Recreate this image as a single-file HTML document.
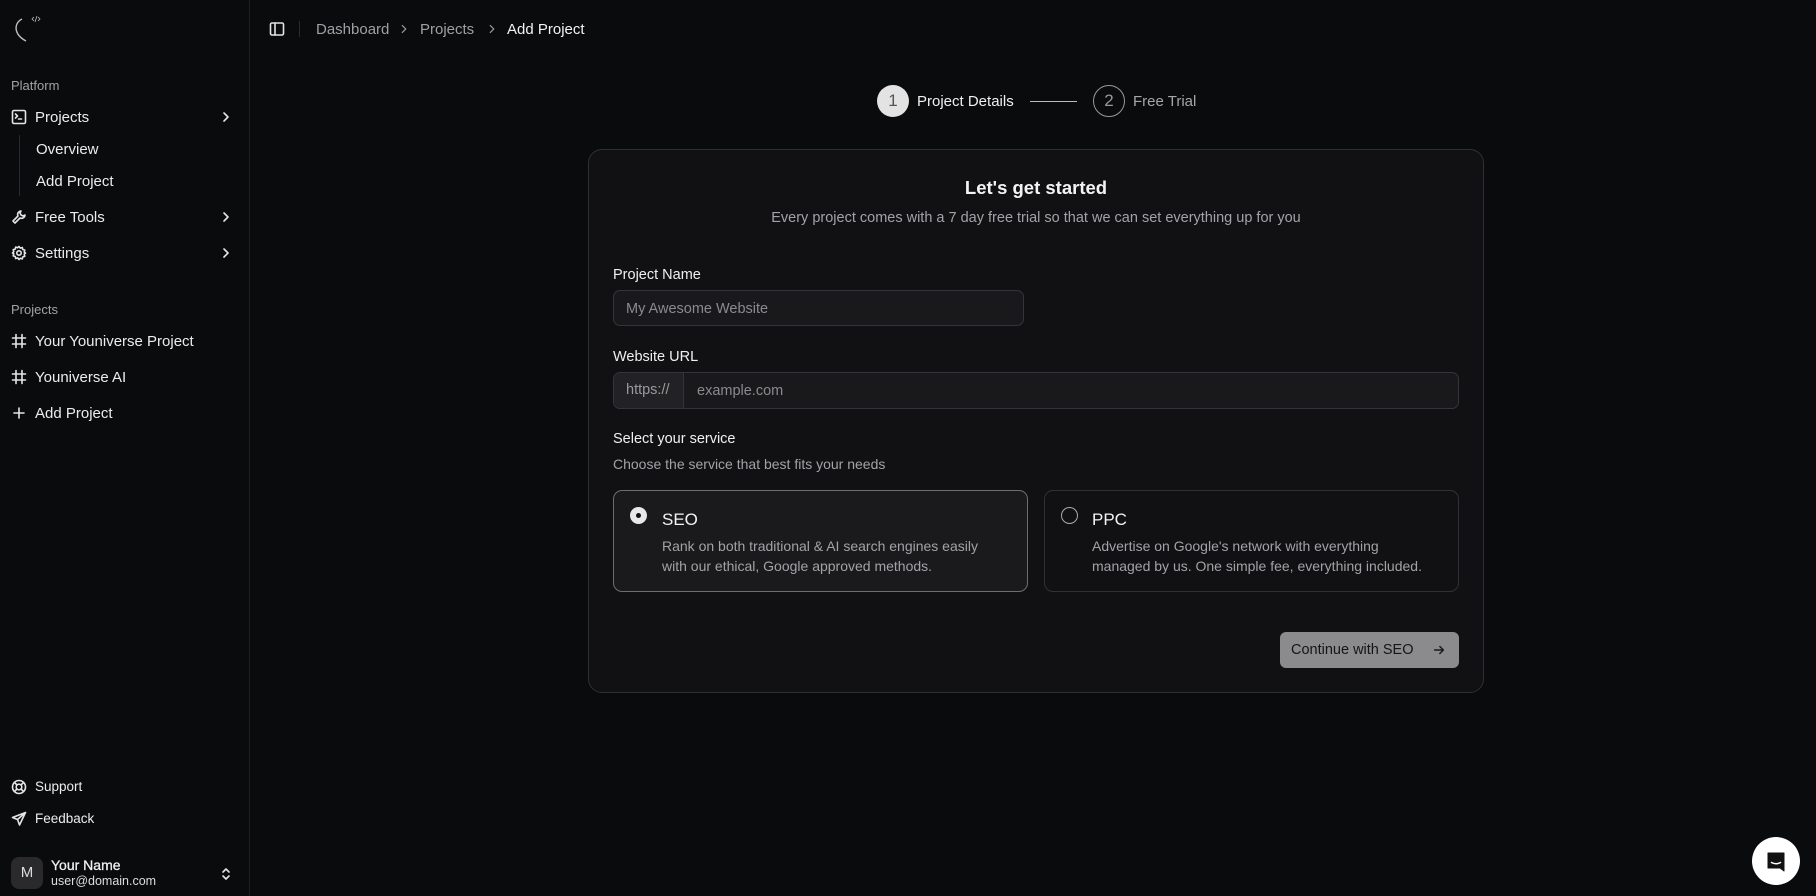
<!DOCTYPE html>
<html><head><meta charset="utf-8"><style>
*{box-sizing:border-box;margin:0;padding:0}
body{width:1816px;height:896px;background:#0a0b0d;font-family:"Liberation Sans",sans-serif;color:#ededed;position:relative;overflow:hidden}
.a{position:absolute;white-space:nowrap}
.side{position:absolute;left:0;top:0;width:250px;height:896px;border-right:1px solid #1e1f22;background:#0a0b0d}
.ic{position:absolute;width:16px;height:16px;fill:none;stroke:#e5e5e5;stroke-width:1.6;stroke-linecap:round;stroke-linejoin:round}
.nav{font-size:15px;color:#ececec}
.lbl{font-size:13px;color:#a3a3a3}
.card{position:absolute;left:588px;top:149px;width:896px;height:544px;border:1px solid #2f3033;border-radius:14px;background:#111114}
.inp{position:absolute;border:1px solid #34353a;border-radius:7px;background:#19191c;font-size:14.5px;color:#8b8b8f}
.opt{position:absolute;top:490px;height:102px;border-radius:9px}
</style></head><body>
<div class="side">
  <svg class="a" style="left:10px;top:12px" width="32" height="32" viewBox="0 0 32 32" fill="none" stroke="#bbb" stroke-width="1.4"><path d="M12 7 C4 11,3 22,16 29"/><path d="M24 5l-2 2 2 2M28 5l2 2-2 2M27 4l-2 6" stroke-width="0.8"/></svg>
  <div class="a lbl" style="left:11px;top:78px">Platform</div>
  <svg class="ic" style="left:11px;top:109px" viewBox="0 0 16 16"><rect x="1.5" y="1.5" width="13" height="13" rx="1.5"/><path d="M4.5 5l2 2-2 2M7.5 10h3"/></svg>
  <div class="a nav" style="left:35px;top:109px">Projects</div>
  <svg class="ic" style="left:218px;top:109px" viewBox="0 0 16 16"><path d="M6 4l4 4-4 4"/></svg>
  <div class="a" style="left:19px;top:135px;width:1px;height:61px;background:#2a2b2e"></div>
  <div class="a nav" style="left:36px;top:141px">Overview</div>
  <div class="a nav" style="left:36px;top:173px">Add Project</div>
  <svg class="ic" style="left:11px;top:209px" viewBox="0 0 16 16"><path d="M10 2a3.5 3.5 0 0 0-3 5L2 12l2 2 5-5a3.5 3.5 0 0 0 5-3l-2 1-2-1-1-2z"/></svg>
  <div class="a nav" style="left:35px;top:209px">Free Tools</div>
  <svg class="ic" style="left:218px;top:209px" viewBox="0 0 16 16"><path d="M6 4l4 4-4 4"/></svg>
  <svg class="ic" style="left:11px;top:245px" viewBox="0 0 16 16"><circle cx="8" cy="8" r="2.2"/><path d="M8 1.5l1.3 1.6 2-.6.5 2 2 .6-.6 2L14.5 8l-1.3 1.3.6 2-2 .6-.5 2-2-.6L8 14.5l-1.3-1.6-2 .6-.5-2-2-.6.6-2L1.5 8l1.3-1.3-.6-2 2-.6.5-2 2 .6z"/></svg>
  <div class="a nav" style="left:35px;top:245px">Settings</div>
  <svg class="ic" style="left:218px;top:245px" viewBox="0 0 16 16"><path d="M6 4l4 4-4 4"/></svg>
  <div class="a lbl" style="left:11px;top:302px">Projects</div>
  <svg class="ic" style="left:11px;top:333px" viewBox="0 0 16 16"><path d="M5 1.5v13M11 1.5v13M1.5 5h13M1.5 11h13"/></svg>
  <div class="a nav" style="left:35px;top:333px">Your Youniverse Project</div>
  <svg class="ic" style="left:11px;top:369px" viewBox="0 0 16 16"><path d="M5 1.5v13M11 1.5v13M1.5 5h13M1.5 11h13"/></svg>
  <div class="a nav" style="left:35px;top:369px">Youniverse AI</div>
  <svg class="ic" style="left:11px;top:405px" viewBox="0 0 16 16"><path d="M8 3v10M3 8h10"/></svg>
  <div class="a nav" style="left:35px;top:405px">Add Project</div>
  <svg class="ic" style="left:11px;top:779px" viewBox="0 0 16 16"><circle cx="8" cy="8" r="6.5"/><circle cx="8" cy="8" r="2.8"/><path d="M3.4 3.4l2.6 2.6M10 10l2.6 2.6M12.6 3.4L10 6M6 10l-2.6 2.6"/></svg>
  <div class="a" style="left:35px;top:779px;font-size:13.5px">Support</div>
  <svg class="ic" style="left:11px;top:811px" viewBox="0 0 16 16"><path d="M14.5 1.5L1.5 6.5l5 2 2 5.5z M6.5 8.5l8-7"/></svg>
  <div class="a" style="left:35px;top:811px;font-size:13.5px">Feedback</div>
  <div class="a" style="left:11px;top:857px;width:32px;height:32px;border-radius:8px;background:#2a2a2c;font-size:15px;color:#ddd;text-align:center;line-height:32px">M</div>
  <div class="a" style="left:51px;top:857px;font-size:14px;color:#f0f0f0;-webkit-text-stroke:0.3px #f0f0f0">Your Name</div>
  <div class="a" style="left:51px;top:874px;font-size:12.5px;color:#ddd">user@domain.com</div>
  <svg class="ic" style="left:218px;top:866px" viewBox="0 0 16 16"><path d="M5 6l3-3 3 3M5 10l3 3 3-3"/></svg>
</div>

<svg class="ic" style="left:269px;top:21px" viewBox="0 0 16 16"><rect x="1.5" y="2" width="13" height="12" rx="1.5"/><path d="M6 2v12"/></svg>
<div class="a" style="left:299px;top:21px;width:1px;height:16px;background:#2a2b2e"></div>
<div class="a" style="left:316px;top:21px;font-size:15px;color:#a0a0a4">Dashboard</div>
<svg class="ic" style="left:397px;top:22px;stroke:#a0a0a4;stroke-width:1.4;width:14px;height:14px" viewBox="0 0 16 16"><path d="M6 4l4 4-4 4"/></svg>
<div class="a" style="left:420px;top:21px;font-size:15px;color:#a0a0a4">Projects</div>
<svg class="ic" style="left:485px;top:22px;stroke:#a0a0a4;stroke-width:1.4;width:14px;height:14px" viewBox="0 0 16 16"><path d="M6 4l4 4-4 4"/></svg>
<div class="a" style="left:507px;top:21px;font-size:15px;color:#f2f2f2">Add Project</div>

<div class="a" style="left:877px;top:85px;width:32px;height:32px;border-radius:50%;background:#e3e3e3;color:#555;font-size:17px;text-align:center;line-height:32px">1</div>
<div class="a" style="left:917px;top:93px;font-size:15px;color:#f0f0f0">Project Details</div>
<div class="a" style="left:1030px;top:101px;width:47px;height:1px;background:#bbb"></div>
<div class="a" style="left:1093px;top:85px;width:32px;height:32px;border-radius:50%;border:1.5px solid #999;color:#999;font-size:17px;text-align:center;line-height:29px">2</div>
<div class="a" style="left:1133px;top:93px;font-size:15px;color:#a6a6a6">Free Trial</div>

<div class="card"></div>
<div class="a" style="left:588px;width:896px;top:177px;text-align:center;font-size:18.5px;font-weight:bold;color:#f3f3f3">Let's get started</div>
<div class="a" style="left:588px;width:896px;top:210px;text-align:center;font-size:14.5px;color:#a3a3a7">Every project comes with a 7 day free trial so that we can set everything up for you</div>

<div class="a" style="left:613px;top:267px;font-size:14.5px;color:#f0f0f0">Project Name</div>
<div class="inp" style="left:613px;top:290px;width:411px;height:36px;padding:10px 12px">My Awesome Website</div>

<div class="a" style="left:613px;top:349px;font-size:14.5px;color:#f0f0f0">Website URL</div>
<div class="inp" style="left:613px;top:372px;width:846px;height:37px">
  <div class="a" style="left:0;top:0;width:70px;height:35px;border-right:1px solid #34353a;background:#222225;border-radius:7px 0 0 7px;padding:9px 12px;color:#9a9a9e">https://</div>
  <div class="a" style="left:83px;top:10px">example.com</div>
</div>

<div class="a" style="left:613px;top:431px;font-size:14.5px;color:#f0f0f0">Select your service</div>
<div class="a" style="left:613px;top:456px;font-size:14px;color:#a3a3a7">Choose the service that best fits your needs</div>

<div class="opt" style="left:613px;width:415px;border:1.5px solid #6d6d70;background:#1a1a1c"></div>
<div class="a" style="left:630px;top:507px;width:17px;height:17px;border-radius:50%;background:#e8e8e8"></div>
<div class="a" style="left:636px;top:513px;width:5px;height:5px;border-radius:50%;background:#111"></div>
<div class="a" style="left:662px;top:510px;font-size:17px;color:#f3f3f3">SEO</div>
<div class="a" style="left:662px;top:536px;font-size:14px;line-height:20px;color:#a3a3a7">Rank on both traditional &amp; AI search engines easily<br>with our ethical, Google approved methods.</div>

<div class="opt" style="left:1044px;width:415px;border:1px solid #303135;background:#111114"></div>
<div class="a" style="left:1061px;top:507px;width:17px;height:17px;border-radius:50%;border:1.3px solid #aaa"></div>
<div class="a" style="left:1092px;top:510px;font-size:17px;color:#f3f3f3">PPC</div>
<div class="a" style="left:1092px;top:536px;font-size:14px;line-height:20px;color:#a3a3a7">Advertise on Google's network with everything<br>managed by us. One simple fee, everything included.</div>

<div class="a" style="left:1280px;top:632px;width:179px;height:36px;border-radius:6px;background:#8b8b8d"></div>
<div class="a" style="left:1291px;top:642px;font-size:14.5px;color:#151515">Continue with SEO</div>
<svg class="a" style="left:1432px;top:643px" width="14" height="14" viewBox="0 0 16 16" fill="none" stroke="#1a1a1a" stroke-width="1.7" stroke-linecap="round" stroke-linejoin="round"><path d="M3 8h10M9 4l4 4-4 4"/></svg>

<div class="a" style="left:1752px;top:837px;width:48px;height:48px;border-radius:50%;background:#fff"></div>
<svg class="a" style="left:1765px;top:850px" width="22" height="22" viewBox="0 0 22 22"><path d="M3 3h16v18l-4-3H3z" fill="#111" stroke="#111" stroke-width="1" stroke-linejoin="round"/><path d="M6.5 12.5q4.5 2.5 9 0" stroke="#fff" stroke-width="1.5" fill="none" stroke-linecap="round"/></svg>
</body></html>
